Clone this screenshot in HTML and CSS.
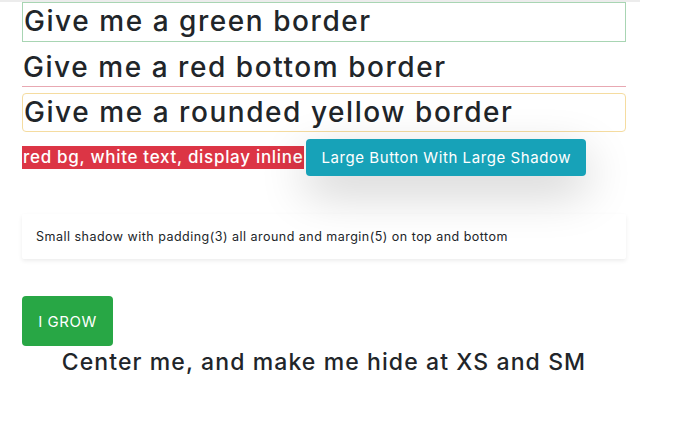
FILE: index.html
```html
<!DOCTYPE html>
<html>
<head>
<meta charset="utf-8">
<link rel="stylesheet" href="styles.css">
</head>
<body>
<div class="topline"></div>
<main class="page">
  <div class="heading green-border">Give me a green border</div>
  <div class="heading red-bottom">Give me a red bottom border</div>
  <div class="heading yellow-rounded">Give me a rounded yellow border</div>
  <div class="inline-row">
    <span class="red-inline">red bg, white text, display inline</span>
    <button class="btn-info-lg">Large Button With Large Shadow</button>
  </div>
  <div class="small-shadow">Small shadow with padding(3) all around and margin(5) on top and bottom</div>
  <button class="btn-grow">I GROW</button>
  <div class="center-text">Center me, and make me hide at XS and SM</div>
</main>
</body>
</html>
```
FILE: styles.css
```css
* { box-sizing: border-box; }
html, body { margin: 0; padding: 0; background: #fff; }
body { font-family: Inter, "Liberation Sans", sans-serif; color: #212529; }
.topline { height: 2px; width: 640px; background: #ececec; }
.page { width: 604px; margin-left: 22px; display: flex; flex-direction: column; align-items: flex-start; }
.heading { width: 100%; font-size: 28px; font-weight: 500; line-height: 36px; padding-left: 1px; letter-spacing: 1.55px; }
.green-border { border: 1px solid #a8d5b3; height: 40px; margin-top: 0; }
.red-bottom { border-bottom: 1px solid #e8a8b2; height: 45px; padding-top: 7px; }
.yellow-rounded { border: 1px solid #f5dca0; border-radius: 4px; height: 39px; margin-top: 6px; }
.inline-row { display: flex; align-items: center; margin-top: 7px; }
.red-inline { background: #dc3545; color: #fff; font-size: 17px; font-weight: 500; line-height: 23px; padding: 0 1px; letter-spacing: 0.7px; }
.btn-info-lg { margin-left: 2px; background: #17a2b8; color: #fff; border: none; border-radius: 4px; font-family: inherit; font-size: 15px; letter-spacing: 0.57px; height: 37px; padding: 0 15px; box-shadow: 0 16px 48px rgba(0,0,0,.2); }
.small-shadow { width: 100%; margin-top: 38px; padding: 14px; font-size: 12.5px; letter-spacing: 0.48px; box-shadow: 0 2px 4px rgba(0,0,0,.075); border-radius: 2px; line-height: 17px; }
.btn-grow { margin-top: 37px; background: #28a745; color: #fff; border: none; border-radius: 4px; font-family: inherit; font-size: 15px; letter-spacing: 0.5px; width: 91px; height: 50px; padding: 0; }
.center-text { width: 100%; text-align: center; font-size: 23px; font-weight: 500; letter-spacing: 1.1px; line-height: 30px; margin-top: 1px; }
```
